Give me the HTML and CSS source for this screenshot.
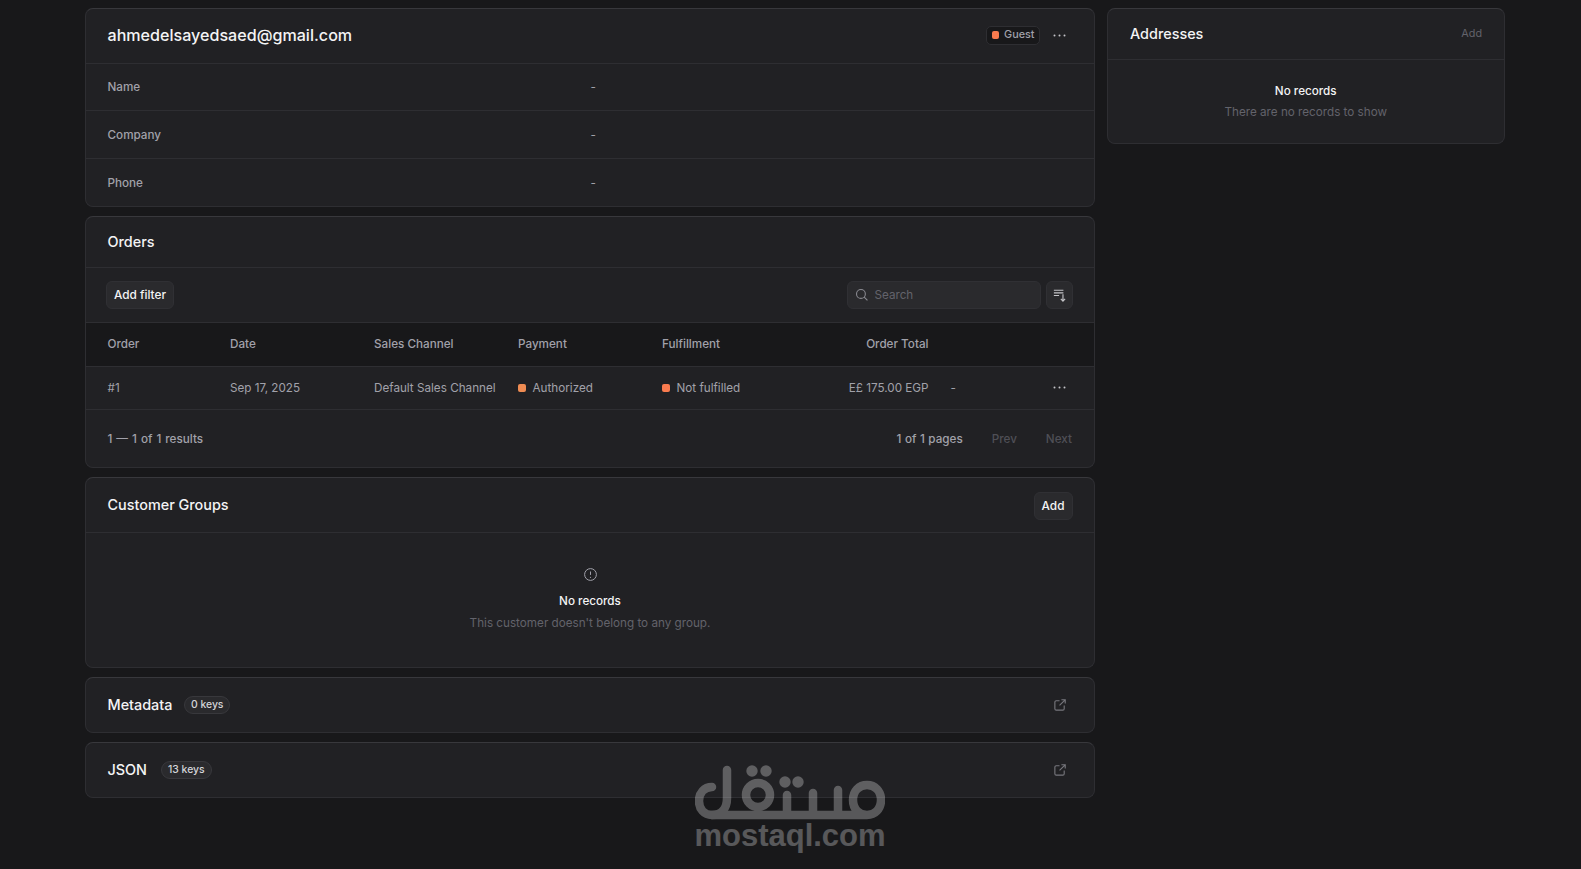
FILE: index.html
```html
<!DOCTYPE html>
<html lang="en">
<head>
<meta charset="utf-8">
<title>Customer</title>
<link rel="stylesheet" href="styles.css">
</head>
<body>
<div class="page">
  <main class="main-col">
    <section class="card">
      <header class="head head-1">
        <h1 class="title-lg">ahmedelsayedsaed@gmail.com</h1>
        <div class="head-actions">
          <span class="tag"><i class="dot dot-sm"></i>Guest</span>
          <svg class="dots" viewBox="0 0 15 15"><circle cx="2.5" cy="7.5" r="1"/><circle cx="7.5" cy="7.5" r="1"/><circle cx="12.5" cy="7.5" r="1"/></svg>
        </div>
      </header>
      <div class="kv kv-1"><span class="label">Name</span><span class="value">-</span></div>
      <div class="kv"><span class="label">Company</span><span class="value">-</span></div>
      <div class="kv kv-last"><span class="label">Phone</span><span class="value">-</span></div>
    </section>

    <section class="card">
      <header class="head head-2"><h2 class="title">Orders</h2></header>
      <div class="toolbar">
        <button class="btn btn-filter">Add filter</button>
        <div class="tools">
          <div class="search">
            <svg class="search-icon" viewBox="0 0 15 15"><circle cx="6.6" cy="6.6" r="4.9"/><path d="M10.200 10.200l3.600 3.600"/></svg>
            <span>Search</span>
          </div>
          <button class="btn btn-sort">
            <svg class="sort-icon" viewBox="0 0 15 15"><path d="M1 1.500h11M1 4.500h11M1 7.500h6M11.500 6v8M9 11.500l2.500 2.500 2.500-2.500"/></svg>
          </button>
        </div>
      </div>
      <div class="row row-head">
        <span>Order</span><span>Date</span><span>Sales Channel</span><span>Payment</span><span>Fulfillment</span><span class="num">Order Total</span><span></span><span></span>
      </div>
      <div class="row row-body">
        <span>#1</span><span>Sep 17, 2025</span><span>Default Sales Channel</span>
        <span class="status"><i class="dot dot-amber"></i>Authorized</span>
        <span class="status"><i class="dot"></i>Not fulfilled</span>
        <span class="num">E£ 175.00 EGP</span><span class="dash">-</span>
        <svg class="dots dots-row" viewBox="0 0 15 15"><circle cx="2.5" cy="7.5" r="1"/><circle cx="7.5" cy="7.5" r="1"/><circle cx="12.5" cy="7.5" r="1"/></svg>
      </div>
      <footer class="pager">
        <span class="results">1 — 1 of 1 results</span>
        <div class="pager-right"><span class="pages">1 of 1 pages</span><span class="off">Prev</span><span class="off">Next</span></div>
      </footer>
    </section>

    <section class="card">
      <header class="head head-3"><h2 class="title">Customer Groups</h2><button class="btn btn-add">Add</button></header>
      <div class="empty empty-groups">
        <svg class="alert" viewBox="0 0 15 15"><circle cx="7.5" cy="7.5" r="5.9"/><path d="M7.5 4.500v3.400"/><circle class="alert-dot" cx="7.5" cy="10.300" r=".6"/></svg>
        <strong>No records</strong>
        <p>This customer doesn't belong to any group.</p>
      </div>
    </section>

    <section class="card card-line">
      <h2 class="title">Metadata</h2><span class="pill">0 keys</span>
      <svg class="ext" viewBox="0 0 15 15"><path d="M7 3H3.500A1.500 1.500 0 0 0 2 4.500V11.500A1.500 1.500 0 0 0 3.500 13H10.500A1.500 1.500 0 0 0 12 11.500V8M7 8l6-6M9 1.900h4.100V6"/></svg>
    </section>
    <section class="card card-line">
      <h2 class="title">JSON</h2><span class="pill pill-json">13 keys</span>
      <svg class="ext" viewBox="0 0 15 15"><path d="M7 3H3.500A1.500 1.500 0 0 0 2 4.500V11.500A1.500 1.500 0 0 0 3.500 13H10.500A1.500 1.500 0 0 0 12 11.500V8M7 8l6-6M9 1.900h4.100V6"/></svg>
    </section>
  </main>

  <aside class="side-col">
    <section class="card">
      <header class="head head-side"><h2 class="title">Addresses</h2><span class="link-add">Add</span></header>
      <div class="empty empty-side">
        <strong>No records</strong>
        <p>There are no records to show</p>
      </div>
    </section>
  </aside>
</div>

<div class="watermark">
  <svg class="wm-logo" viewBox="0 0 190 56">
    <g class="wm-stroke">
      <path d="M32 5V33C32 44 26 50 17 50C9 50 4 44 4 36C4 28 9 22 17 22"/>
      <path d="M17 50H172C180 50 186 44 186 35C186 26 180 20 172 20C164 20 158 26 158 35C158 44 164 50 172 50"/>
      <circle cx="63" cy="30" r="12"/>
      <path d="M92 30V46M118 28V46M143 25V46"/>
    </g>
    <circle class="wm-fill" cx="57" cy="6" r="5.700"/>
    <circle class="wm-fill" cx="71" cy="6" r="5.700"/>
    <circle class="wm-fill" cx="90" cy="17" r="5.700"/>
    <circle class="wm-fill" cx="103" cy="17" r="5.700"/>
  </svg>
  <span class="wm-text">mostaql.com</span>
</div>
</body>
</html>
```
FILE: styles.css
```css
* { box-sizing: border-box; }
html, body { margin: 0; height: 100%; overflow: hidden; }
body {
  background: #18181a;
  color: #a1a1aa;
  font-family: Inter, "Liberation Sans", sans-serif;
  font-size: 11.700px;
  font-weight: 400;
  position: relative;
}
h1, h2, p { margin: 0; }
.page {
  display: grid;
  grid-template-columns: 1010px 397.500px;
  column-gap: 12px;
  padding: 8px 0 0 85px;
  align-items: start;
}
.main-col { display: flex; flex-direction: column; gap: 9.500px; }
.card {
  background: #212124;
  border: 1px solid #2e2e32;
  border-top-color: #38383c;
  border-radius: 8px;
}
.head {
  display: flex;
  align-items: center;
  justify-content: space-between;
  padding: 0 21.500px;
  border-bottom: 1px solid #2e2e32;
}
.head-1 { height: 55px; padding-bottom: 2px; }
.head-2 { height: 51px; padding-bottom: 2px; }
.head-3 { height: 55px; }
.head-3 .title { margin-bottom: 1px; }
.btn-add { margin-top: 1px; }
.head-side { height: 51px; padding-left: 22px; padding-bottom: 1px; }
.title-lg { font-size: 16.100px; font-weight: 500; color: #f4f4f5; }
.title { font-size: 14.400px; font-weight: 500; color: #f4f4f5; }
.head-actions { display: flex; align-items: center; gap: 12px; }
.tag {
  display: flex; align-items: center; gap: 5.500px;
  height: 19px; padding: 0 4px 1px 5px;
  background: #18181a; border: 1px solid #2e2e32; border-radius: 5px;
  font-size: 10.800px; font-weight: 500; color: #a1a1aa;
}
.dot { display: block; width: 7.500px; height: 7.500px; border-radius: 2px; background: #f97b4f; flex: none; }
.dot-amber { background: #ef8c53; }
.dot-sm { width: 7px; height: 8px; margin-top: 1px; }
.dots { width: 15px; height: 15px; fill: #c4c4c8; flex: none; }
.dots-row { margin-top: -1px; }
.head-actions .dots { margin-right: 6px; }
.kv { display: grid; grid-template-columns: 1fr 1fr; align-items: center; height: 48px; padding: 0 21.500px; border-bottom: 1px solid #2e2e32; }
.kv-1 { height: 47px; padding-bottom: 1px; }
.kv-last { border-bottom: 0; height: 46.500px; padding-top: 1px; }
.label { font-weight: 500; color: #a1a1aa; }
.value { padding-left: 0.500px; color: #a1a1aa; }
.toolbar { display: flex; align-items: center; justify-content: space-between; height: 54px; padding: 0 21px 0 20px; }
.tools { display: flex; align-items: center; gap: 5px; }
.btn {
  display: flex; align-items: center; justify-content: center;
  height: 28px; padding: 0;
  background: #2a2a2d; border: 1px solid #303034; border-radius: 6px;
  color: #f4f4f5; font: 500 11.800px Inter, "Liberation Sans", sans-serif;
}
.btn-filter { width: 68px; }
.btn-sort { width: 27px; }
.btn-add { width: 39px; }
.search {
  display: flex; align-items: center; gap: 6px;
  width: 194px; height: 28px; padding: 0 7px;
  background: #2a2a2d; border: 1px solid #303034; border-radius: 6px;
  color: #63636b;
}
.search-icon { width: 13.500px; height: 13.500px; fill: none; stroke: #8a8a91; stroke-width: 1.200; }
.sort-icon { width: 13px; height: 13px; fill: none; stroke: #c4c4c8; stroke-width: 1.300; }
.row {
  display: grid;
  grid-template-columns: 122.500px 144px 144px 144px 144px 122.500px 1fr 15px;
  align-items: center;
  padding: 0 27px 0 21.500px;
  border-top: 1px solid #2e2e32;
}
.row-head { height: 44px; padding-bottom: 1px; background: #18181a; font-weight: 500; }
.row-body { height: 44px; border-bottom: 1px solid #2e2e32; }
.num { text-align: right; }
.dash { padding-left: 22px; }
.status { display: flex; align-items: center; gap: 7px; }
.pager { display: flex; align-items: center; justify-content: space-between; height: 56.500px; padding: 1px 22px 0 21.500px; font-weight: 500; }
.results { word-spacing: .9px; }
.pages { word-spacing: .4px; }
.pager-right { display: flex; align-items: center; gap: 29px; }
.off { color: #4f4f56; }
.empty { display: flex; flex-direction: column; align-items: center; }
.empty strong { font-weight: 500; color: #f4f4f5; }
.empty p { color: #63636b; }
.empty-groups { height: 133.500px; padding-top: 33.500px; }
.empty-side { height: 83px; padding-top: 24px; }
.empty-side p { margin-top: 6.500px; }
.empty-groups p { margin-top: 8px; }
.alert { width: 15px; height: 15px; fill: none; stroke: #a1a1aa; stroke-width: 1; margin-bottom: 12.500px; }
.alert-dot { fill: #a1a1aa; stroke: none; }
.link-add { font-weight: 400; font-size: 10.800px; color: #63636b; margin-top: -1px; }
.card-line { display: flex; align-items: center; height: 55.500px; padding: 0 27.500px 0 21.500px; }
.pill {
  margin-left: 12px; height: 18px; padding: 0 5.500px;
  display: flex; align-items: center;
  background: #2a2a2d; border: 1px solid #38383c; border-radius: 9px;
  font-size: 10.400px; font-weight: 500; color: #d4d4d8;
}
.pill-json { margin-left: 14px; padding: 0 6px; }
.ext { margin-left: auto; width: 14px; height: 14px; fill: none; stroke: #77777d; stroke-width: 1.200; }
.watermark {
  position: absolute; left: 695px; top: 765px; width: 190px;
  display: flex; flex-direction: column; align-items: center;
  pointer-events: none;
  opacity: .28;
}
.wm-logo { display: block; width: 190px; height: 56px; }
.wm-stroke { fill: none; stroke: #fff; stroke-width: 8.500; stroke-linecap: round; stroke-linejoin: round; }
.wm-fill { fill: #fff; }
.wm-text { font: 700 31px/29px "Liberation Sans", sans-serif; color: #fff; white-space: nowrap; }
```
